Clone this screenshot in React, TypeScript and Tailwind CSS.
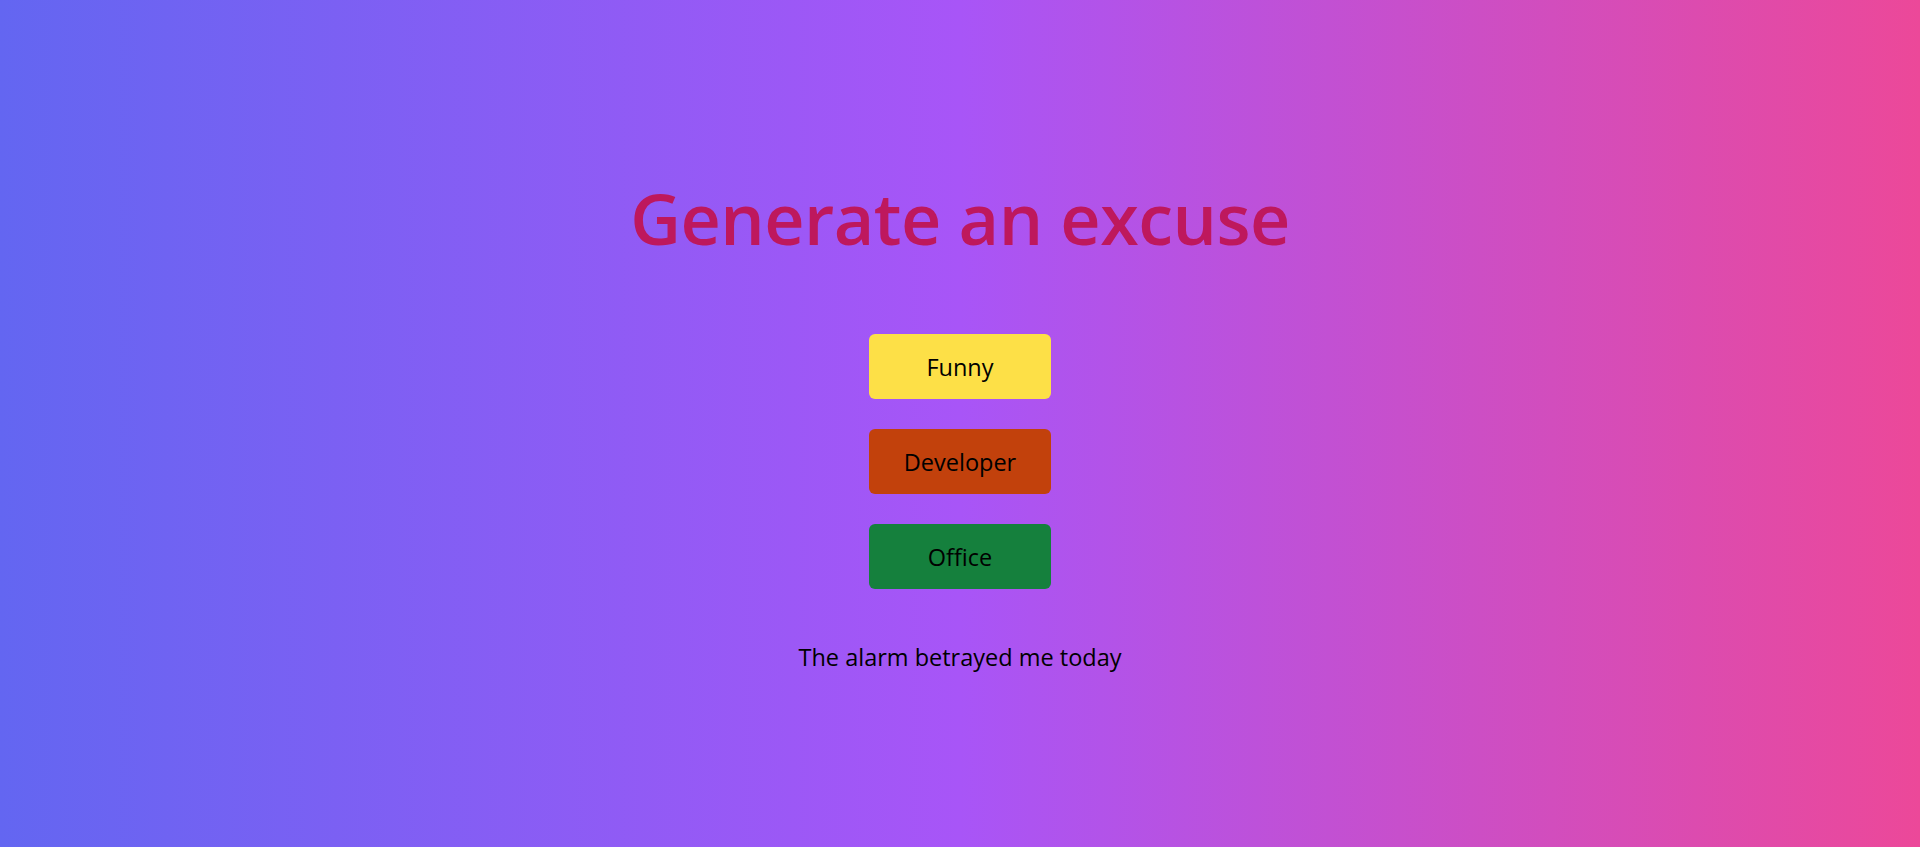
import React, { useState } from "react";

const excuses: Record<string, string> = {
  Funny: "The alarm betrayed me today",
  Developer: "It works on my machine",
  Office: "I was stuck in a meeting",
};

export default function App() {
  const [text, setText] = useState("The alarm betrayed me today");
  return (
    <div
      className="min-h-screen w-full bg-[linear-gradient(to_right,#6366f1,#a855f7,#ec4899)] flex flex-col items-center"
      style={{ fontFamily: '"Open Sans", "Noto Sans", sans-serif' }}
    >
      <h1 className="mt-[182px] text-[70px] leading-[72px] font-semibold text-[#be185d] tracking-[-0.5px]">
        Generate an excuse
      </h1>
      <div className="mt-[80px] flex flex-col gap-[30px]">
        <button
          onClick={() => setText(excuses.Funny)}
          className="w-[182px] h-[65px] pt-[2px] rounded-md bg-[#fde047] text-black text-[23.5px]"
        >
          Funny
        </button>
        <button
          onClick={() => setText(excuses.Developer)}
          className="w-[182px] h-[65px] pt-[2px] rounded-md bg-[#c2410c] text-black text-[23.5px]"
        >
          Developer
        </button>
        <button
          onClick={() => setText(excuses.Office)}
          className="w-[182px] h-[65px] pt-[2px] rounded-md bg-[#15803d] text-black text-[23.5px]"
        >
          Office
        </button>
      </div>
      <p className="mt-[52px] text-[23.5px] leading-[32px] text-black">{text}</p>
    </div>
  );
}
